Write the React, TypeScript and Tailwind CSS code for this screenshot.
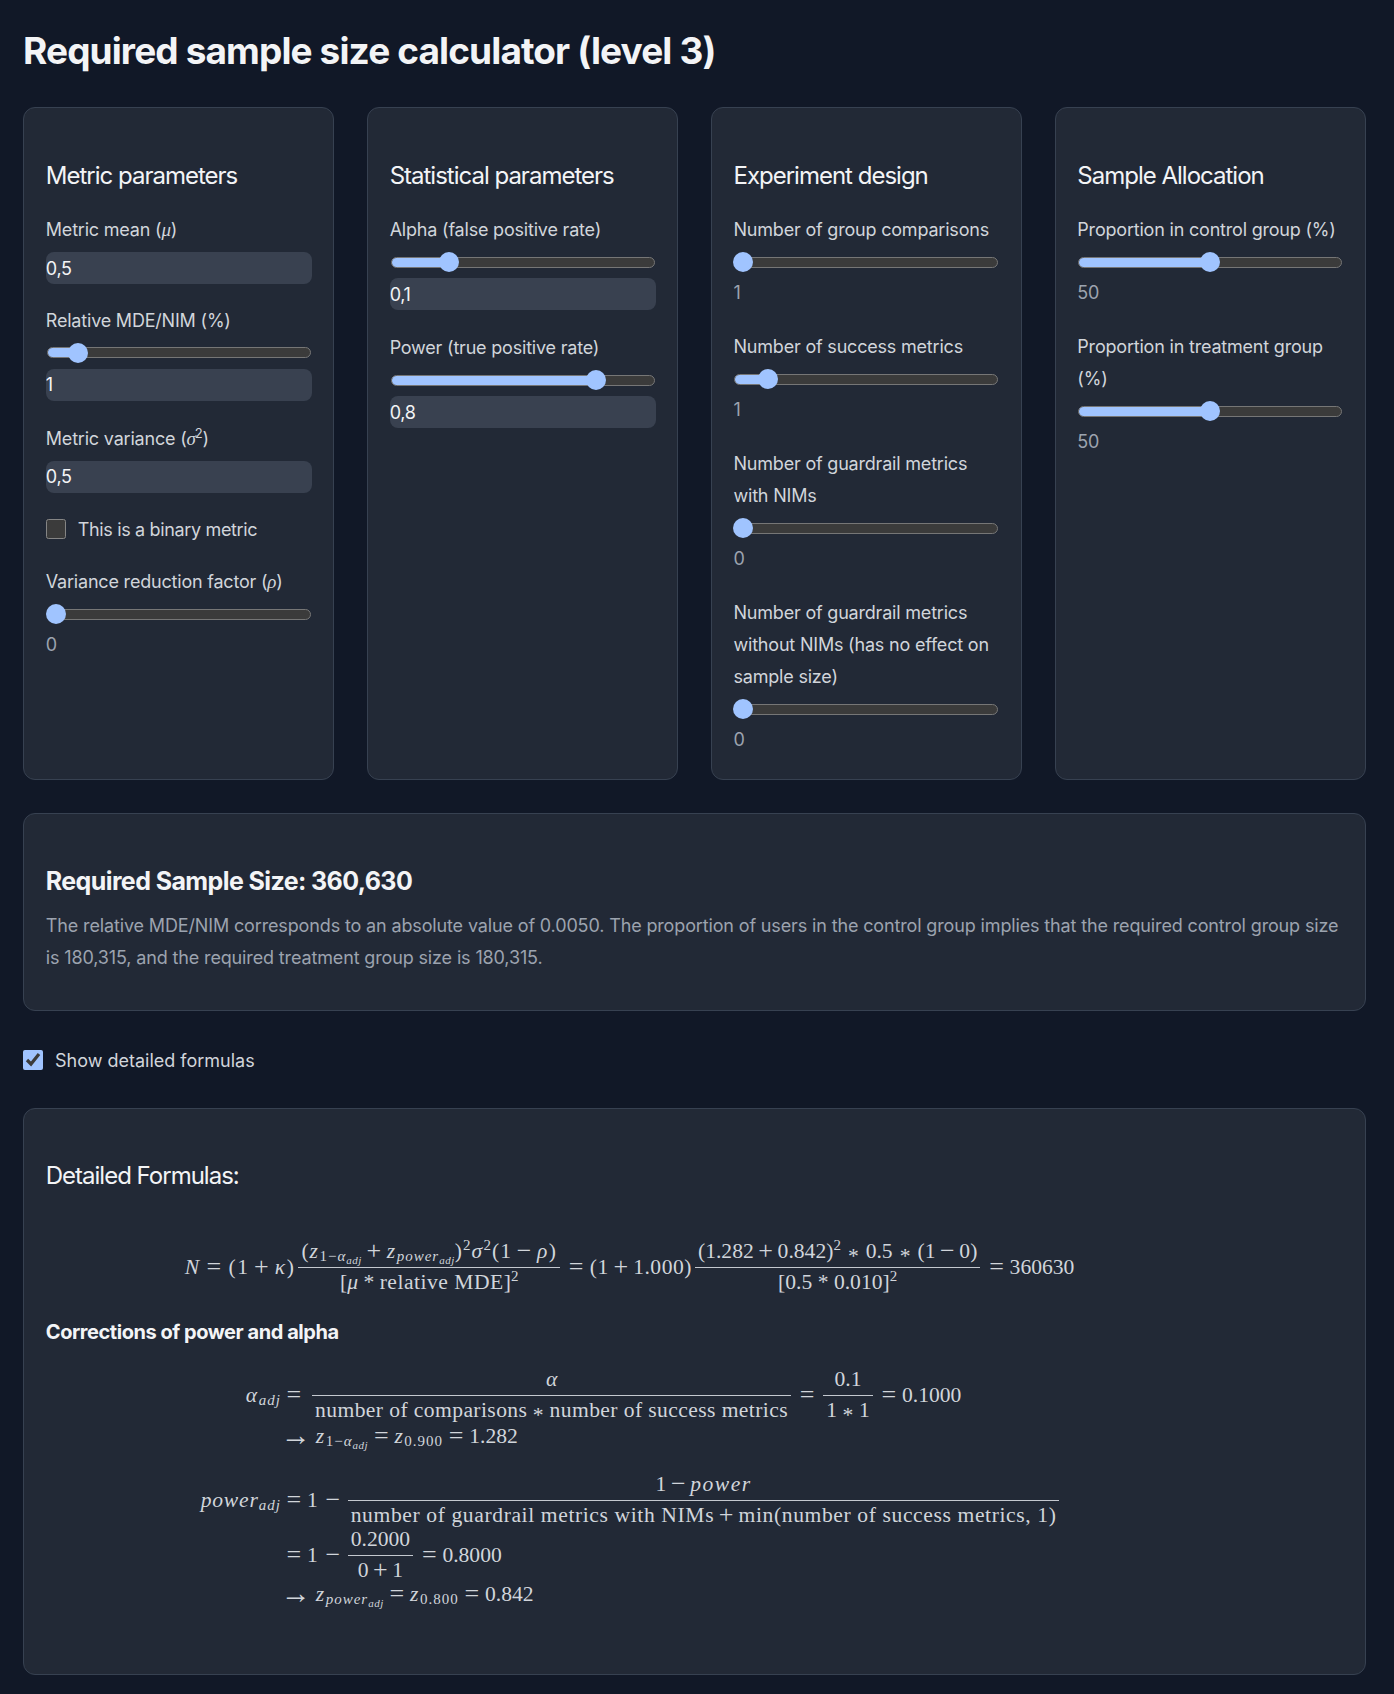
import React from 'react';

const Sub = ({ children }: { children: React.ReactNode }) => (
    <span className="text-[15px] tracking-[1px] align-[-3px] leading-[0]">{children}</span>
);
const Sub2 = ({ children }: { children: React.ReactNode }) => (
    <span className="text-[11px] italic tracking-[0.5px] align-[-3px] leading-[0]">{children}</span>
);
const Sup = ({ children }: { children: React.ReactNode }) => (
    <span className="text-[15px] align-[8px] leading-[0]">{children}</span>
);
// math operators, the serif's own are narrower than the ones in the picture
const Rel = () => <span className="mx-[5.8px] text-[26px] leading-[0] align-[-1px]">=</span>;
const Bin = ({ children }: { children: React.ReactNode }) => (
    <span className="mx-[4.6px] text-[26px] leading-[0] align-[-1px]">{children}</span>
);
const Ast = () => <span className="mx-[7px] leading-[0] align-[-5px]">*</span>;
const AstTight = () => <span className="mx-[5.5px] leading-[0] align-[-5px]">*</span>;
const Arrow = () => <span className="mr-[5px] text-[30px] leading-[0] align-[-2px]">→</span>;
const I = ({ children }: { children: React.ReactNode }) => <i className="tracking-[1.5px]">{children}</i>;

const Frac = ({ num, den }: { num: React.ReactNode; den: React.ReactNode }) => (
    <span className="mx-[3px] inline-flex flex-col items-center align-middle">
        <span className="mb-1 whitespace-nowrap px-[3px]">{num}</span>
        <span className="h-px w-full bg-[#c4c8cf]" />
        <span className="mt-[2px] whitespace-nowrap px-[3px]">{den}</span>
    </span>
);

const Z1 = () => (
    <>
        <I>z</I>
        <Sub>1−<i>α</i><Sub2>adj</Sub2></Sub>
    </>
);
const ZPower = () => (
    <>
        <I>z</I>
        <Sub><i>power</i><Sub2>adj</Sub2></Sub>
    </>
);

type Field =
    | { kind: 'number'; label: React.ReactNode; value: string }
    | { kind: 'slider'; label: React.ReactNode; pct: number; value: string; input?: boolean }
    | { kind: 'check'; label: string };

const Greek = ({ children }: { children: React.ReactNode }) => (
    <i className="font-['Liberation_Serif',serif] text-[19px]">{children}</i>
);

const cards: { title: string; fields: Field[] }[] = [
    {
        title: 'Metric parameters',
        fields: [
            { kind: 'number', label: <>Metric mean (<Greek>μ</Greek>)</>, value: '0,5' },
            { kind: 'slider', label: 'Relative MDE/NIM (%)', pct: 9, value: '1', input: true },
            { kind: 'number', label: <>Metric variance (<Greek>σ</Greek><sup className="-ml-px text-[13px]">2</sup>)</>, value: '0,5' },
            { kind: 'check', label: 'This is a binary metric' },
            { kind: 'slider', label: <>Variance reduction factor (<Greek>ρ</Greek>)</>, pct: 0, value: '0' },
        ],
    },
    {
        title: 'Statistical parameters',
        fields: [
            { kind: 'slider', label: 'Alpha (false positive rate)', pct: 20, value: '0,1', input: true },
            { kind: 'slider', label: 'Power (true positive rate)', pct: 80, value: '0,8', input: true },
        ],
    },
    {
        title: 'Experiment design',
        fields: [
            { kind: 'slider', label: 'Number of group comparisons', pct: 0, value: '1' },
            { kind: 'slider', label: 'Number of success metrics', pct: 10, value: '1' },
            { kind: 'slider', label: 'Number of guardrail metrics with NIMs', pct: 0, value: '0' },
            { kind: 'slider', label: 'Number of guardrail metrics without NIMs (has no effect on sample size)', pct: 0, value: '0' },
        ],
    },
    {
        title: 'Sample Allocation',
        fields: [
            { kind: 'slider', label: 'Proportion in control group (%)', pct: 50, value: '50' },
            { kind: 'slider', label: 'Proportion in treatment group (%)', pct: 50, value: '50' },
        ],
    },
];

const NumberBox = ({ value }: { value: string }) => (
    <input
        type="text"
        readOnly
        value={value}
        className="block h-8 w-full rounded-lg bg-[#394150] text-[18px] tracking-[-0.3px] text-[#f3f4f6] outline-none"
    />
);

const Slider = ({ pct }: { pct: number }) => {
    // thumb is 20px wide and stays inside the track, like a native range input
    const offset = `calc((100% - 20px) * ${pct / 100})`;
    return (
        <div className="relative flex h-5 items-center px-px">
            <div className="relative h-[11px] w-full overflow-hidden rounded-full border border-[#767676] bg-[#3b3b3b]">
                <div className="h-full bg-[#a0c4ff]" style={{ width: `calc((100% - 20px) * ${pct / 100} + 10px)` }} />
            </div>
            <div className="absolute top-0 h-5 w-5 rounded-full bg-[#a0c4ff]" style={{ left: offset }} />
        </div>
    );
};

const FieldRow = ({ field }: { field: Field }) => {
    if (field.kind === 'check') {
        return (
            <label className="mb-[21px] flex h-8 items-center gap-3 text-[#d1d5db]">
                <input type="checkbox" className="m-0 h-5 w-5 [color-scheme:dark] accent-[#a0c4ff]" />
                <span className="tracking-[-0.35px]">{field.label}</span>
            </label>
        );
    }
    return (
        <div className={field.kind === 'number' ? 'mb-[20.5px]' : 'mb-[22px]'}>
            <div className="mb-1.5 leading-8 tracking-[-0.2px] text-[#d1d5db]">{field.label}</div>
            {field.kind === 'number' && <NumberBox value={field.value} />}
            {field.kind === 'slider' && (
                <>
                    <Slider pct={field.pct} />
                    {field.input ? (
                        <div className="mt-1.5"><NumberBox value={field.value} /></div>
                    ) : (
                        <div className="mb-[3.5px] mt-[5px] leading-8 tracking-[-0.3px] text-[#9ca3af]">{field.value}</div>
                    )}
                </>
            )}
        </div>
    );
};

export default function App() {
    return (
        <div className="min-h-[1694px] bg-[#111827] pl-[23px] pt-[31px] text-[18px] font-['Inter',sans-serif]">
            <h1 className="mb-[36px] text-[37px] font-bold leading-10 tracking-[-0.88px] text-[#f3f4f6]">
                Required sample size calculator (level 3)
            </h1>

            <div className="grid w-[1343px] grid-cols-4 gap-[32.4px]">
                {cards.map((card) => (
                    <div key={card.title} className="h-[673px] rounded-xl border border-[#374151] bg-[#222936] px-[21.8px] pt-[52px]">
                        <h2 className="mb-[22px] text-[24px] font-normal leading-8 tracking-[-1px] text-[#f3f4f6]">{card.title}</h2>
                        {card.fields.map((f, i) => (
                            <FieldRow key={i} field={f} />
                        ))}
                    </div>
                ))}
            </div>

            <div className="mt-[33px] h-[198px] w-[1343px] rounded-xl border border-[#374151] bg-[#222936] px-[21.8px] pt-[51px]">
                <h2 className="mb-[13px] text-[25px] font-bold leading-8 tracking-[-0.6px] text-[#f3f4f6]">Required Sample Size: 360,630</h2>
                <p className="leading-8 tracking-[-0.14px] text-[#9ca3af]">
                    The relative MDE/NIM corresponds to an absolute value of 0.0050. The proportion of users in the control group implies that the required control group size is 180,315, and the required treatment group size is 180,315.
                </p>
            </div>

            <label className="mb-8 mt-[33px] flex h-8 items-center gap-3 text-[#d1d5db]">
                <input type="checkbox" defaultChecked className="m-0 h-5 w-5 [color-scheme:dark] accent-[#a0c4ff]" />
                <span className="tracking-[0px]">Show detailed formulas</span>
            </label>

            <div className="h-[567px] w-[1343px] rounded-xl border border-[#374151] bg-[#222936] px-[21.8px] pt-[51px]">
                <h2 className="text-[24px] font-normal leading-8 tracking-[-1px] text-[#f3f4f6]">Detailed Formulas:</h2>

                <div className="ml-[139px] mt-[47px] flex items-center whitespace-nowrap font-['Liberation_Serif',serif] text-[21.6px] leading-6 text-[#d1d5db]">
                    <span className="tracking-[1.5px]"><I>N</I><Rel />(1<Bin>+</Bin><i>κ</i>)</span>
                    <Frac
                        num={<span className="tracking-[1px]">(<Z1 /><Bin>+</Bin><ZPower />)<Sup>2</Sup><I>σ</I><Sup>2</Sup>(1<Bin>−</Bin><I>ρ</I>)</span>}
                        den={<>[<i>μ</i> * <span className="tracking-[0.5px]">relative MDE</span>]<Sup>2</Sup></>}
                    />
                    <span className="tracking-[0.5px]"><Rel />(1<Bin>+</Bin>1.000)</span>
                    <Frac
                        num={<>(1.282<Bin>+</Bin>0.842)<Sup>2</Sup><Ast />0.5<Ast />(1<Bin>−</Bin>0)</>}
                        den={<>[0.5 * 0.010]<Sup>2</Sup></>}
                    />
                    <Rel />360630
                </div>

                <h3 className="mb-[19px] mt-[22px] text-[20px] font-bold leading-8 tracking-[-0.45px] text-[#f3f4f6]">Corrections of power and alpha</h3>

                <div className="grid grid-cols-[235px_1fr] items-center whitespace-nowrap font-['Liberation_Serif',serif] text-[21.6px] leading-6 text-[#d1d5db]">
                    <div className="text-right"><I>α</I><Sub><i>adj</i></Sub></div>
                    <div className="flex items-center">
                        <Rel />
                        <span className="ml-[2px]" />
                        <Frac
                            num={<i>α</i>}
                            den={<span className="tracking-[0.4px]">number of comparisons<AstTight />number of success metrics</span>}
                        />
                        <Rel />
                        <Frac num="0.1" den={<>1<AstTight />1</>} />
                        <Rel />0.1000
                    </div>

                    <div />
                    <div className="mt-[2px]"><Arrow /><Z1 /><Rel /><I>z</I><Sub>0.900</Sub><Rel />1.282</div>

                    <div className="mt-6 text-right"><i className="tracking-[0.8px]">power</i><Sub><i>adj</i></Sub></div>
                    <div className="mt-6 flex items-center">
                        <Rel />1<span className="ml-[3px]" /><Bin>−</Bin>
                        <Frac
                            num={<>1<Bin>−</Bin><I>power</I></>}
                            den={<span className="tracking-[0.6px]">number of guardrail metrics with NIMs<Bin>+</Bin>min(number of success metrics, 1)</span>}
                        />
                    </div>

                    <div />
                    <div className="flex items-center">
                        <Rel />1<span className="ml-[3px]" /><Bin>−</Bin>
                        <Frac num="0.2000" den={<>0<Bin>+</Bin>1</>} />
                        <Rel />0.8000
                    </div>

                    <div />
                    <div><Arrow /><ZPower /><Rel /><I>z</I><Sub>0.800</Sub><Rel />0.842</div>
                </div>
            </div>
        </div>
    );
}
